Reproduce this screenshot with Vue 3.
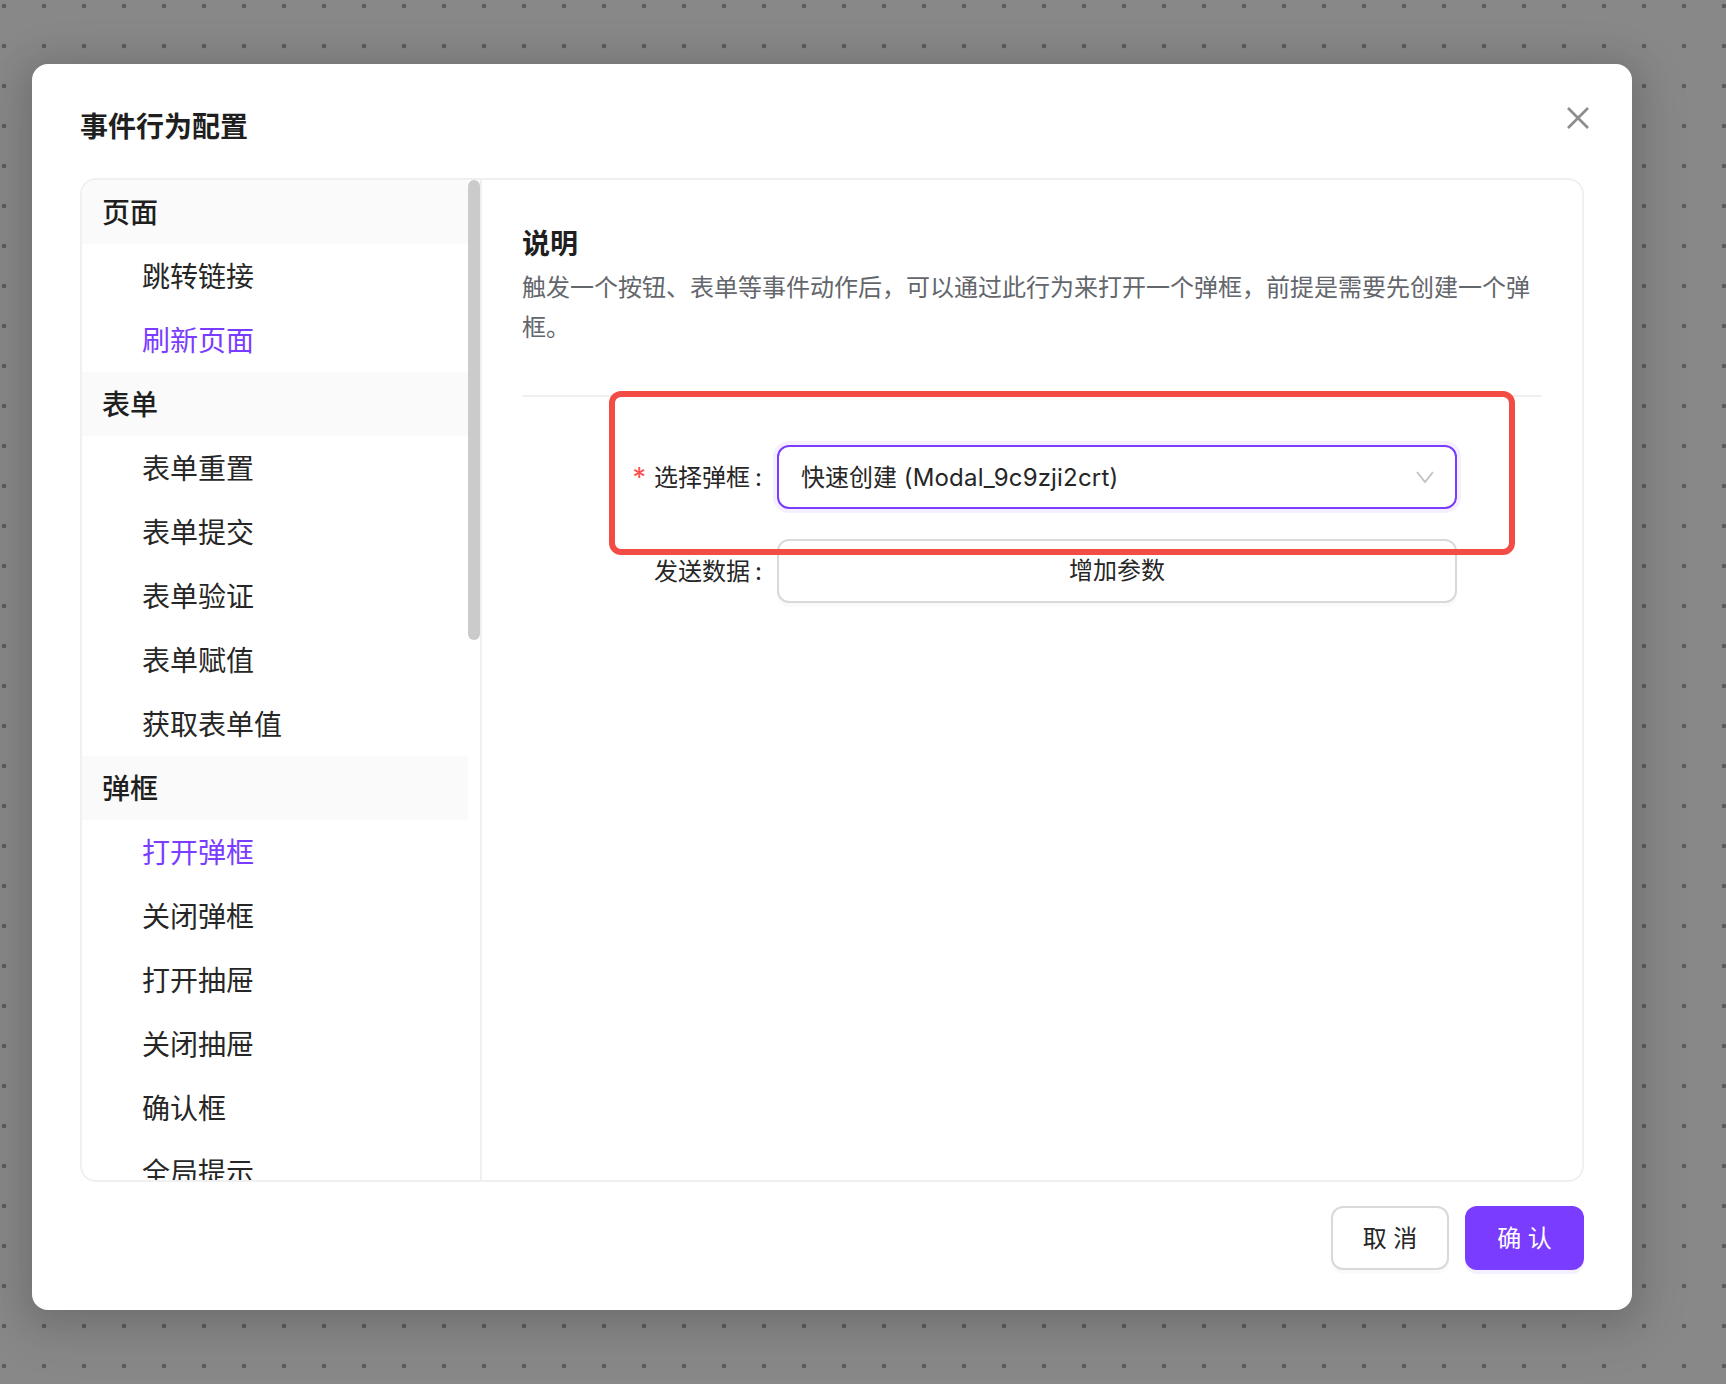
<script setup>
const groups = [
  { name: '页面', items: [{ t: '跳转链接' }, { t: '刷新页面', on: true }] },
  { name: '表单', items: [{ t: '表单重置' }, { t: '表单提交' }, { t: '表单验证' }, { t: '表单赋值' }, { t: '获取表单值' }] },
  { name: '弹框', items: [{ t: '打开弹框', on: true }, { t: '关闭弹框' }, { t: '打开抽屉' }, { t: '关闭抽屉' }, { t: '确认框' }, { t: '全局提示' }] },
]
</script>

<template>
  <div class="page">
    <div class="modal">
      <svg class="close" width="22" height="22" viewBox="0 0 22 22" aria-label="关闭">
        <path d="M1 1L21 21M21 1L1 21" />
      </svg>
      <h2 class="title">事件行为配置</h2>
      <div class="panel">
        <aside class="side">
          <div class="list">
            <template v-for="g in groups" :key="g.name">
              <div class="group">{{ g.name }}</div>
              <div v-for="i in g.items" :key="i.t" class="item" :class="{ on: i.on }">{{ i.t }}</div>
            </template>
          </div>
          <div class="track"><div class="thumb"></div></div>
        </aside>
        <section class="pane">
          <h3 class="head">说明</h3>
          <p class="desc">触发一个按钮、表单等事件动作后，可以通过此行为来打开一个弹框，前提是需要先创建一个弹框。</p>
          <div class="divider"></div>
          <div class="row">
            <label class="label"><span class="req">*</span>选择弹框<span class="colon">:</span></label>
            <div class="select">
              <span class="value">快速创建 <span class="latin">(Modal_9c9zji2crt)</span></span>
              <svg class="chev" width="18" height="12" viewBox="0 0 18 12">
                <path d="M1 1L9 11L17 1" />
              </svg>
            </div>
          </div>
          <div class="row">
            <label class="label">发送数据<span class="colon">:</span></label>
            <button class="add">增加参数</button>
          </div>
          <div class="mark"></div>
        </section>
      </div>
      <div class="foot">
        <button class="btn cancel">取 消</button>
        <button class="btn ok">确 认</button>
      </div>
    </div>
  </div>
</template>

<style>
html, body { margin: 0; background: #888; }
</style>

<style scoped>
.page {
  width: 1726px;
  height: 1384px;
  box-sizing: border-box;
  padding: 64px 0 0 32px;
  overflow: hidden;
  background-color: #888;
  background-image: radial-gradient(circle at center, #5b5b5b 2px, transparent 2.6px);
  background-size: 40px 40px;
  background-position: -16px -14px;
  font-family: Inter, "Noto Sans CJK SC", sans-serif;
  color: #1f1f1f;
}
.modal {
  position: relative;
  width: 1600px;
  height: 1246px;
  box-sizing: border-box;
  padding: 40px 48px;
  background: #fff;
  border-radius: 16px;
  box-shadow: 0 6px 32px 8px rgba(0, 0, 0, .12), 0 12px 56px 16px rgba(0, 0, 0, .06);
}
.close {
  position: absolute;
  top: 43px;
  right: 43px;
  fill: none;
  stroke: #8c8c8c;
  stroke-width: 2.6;
}
.title {
  margin: 0 0 28px;
  font-size: 28px;
  line-height: 46px;
  font-weight: 600;
}
.panel {
  display: flex;
  height: 1004px;
  box-sizing: border-box;
  border: 2px solid #f0f0f0;
  border-radius: 16px;
  overflow: hidden;
}
.side {
  display: flex;
  flex: none;
  width: 400px;
  box-sizing: border-box;
  border-right: 2px solid #f0f0f0;
}
.list { width: 386px; flex: none; }
.group {
  height: 64px;
  padding-left: 20px;
  background: #fafafa;
  font-size: 28px;
  line-height: 66px;
  font-weight: 500;
}
.item {
  height: 64px;
  padding-left: 60px;
  font-size: 28px;
  line-height: 66px;
  color: #262626;
}
.item.on { color: #7a3cff; }
.track { width: 12px; flex: none; }
.thumb { height: 460px; background: #cbcbcb; border-radius: 6px; }
.pane {
  position: relative;
  flex: 1;
  padding: 44px 40px 0;
}
.head {
  margin: 0 0 4px;
  font-size: 28px;
  line-height: 40px;
  font-weight: 600;
}
.desc {
  margin: 0;
  font-size: 24px;
  line-height: 40px;
  color: #63666b;
}
.divider {
  height: 2px;
  margin: 47px 0 48px;
  background: #f0f0f0;
}
.row {
  display: flex;
  align-items: center;
  height: 64px;
  margin-bottom: 30px;
}
.label {
  display: flex;
  justify-content: flex-end;
  align-items: center;
  flex: none;
  width: 255px;
  box-sizing: border-box;
  margin-top: 2px;
  padding-right: 16px;
  font-size: 24px;
  line-height: 64px;
  color: #262626;
}
.req { margin-right: 8px; font-size: 27px; color: #ff4d4f; }
.colon { margin-left: 5px; margin-right: -1px; }
.select {
  display: flex;
  align-items: center;
  justify-content: space-between;
  width: 680px;
  height: 64px;
  box-sizing: border-box;
  padding: 0 21px 0 22px;
  border: 2px solid #7a3cff;
  border-radius: 12px;
  box-shadow: 0 0 0 4px #f5f0ff;
  font-size: 24px;
}
.value { color: #262626; position: relative; top: -2px; }
.latin { letter-spacing: .18px; }
.chev { fill: none; stroke: #c4c4c4; stroke-width: 2; }
.add {
  width: 680px;
  height: 64px;
  padding: 0 0 5px;
  background: #fff;
  border: 2px solid #d9d9d9;
  border-radius: 12px;
  box-shadow: 0 4px 0 rgba(0, 0, 0, .02);
  font: inherit;
  font-size: 24px;
  color: #262626;
}
.mark {
  position: absolute;
  left: 127px;
  top: 211px;
  width: 906px;
  height: 164px;
  box-sizing: border-box;
  border: 6px solid #f24c45;
  border-radius: 12px;
  pointer-events: none;
}
.foot {
  display: flex;
  justify-content: flex-end;
  gap: 16px;
  margin-top: 24px;
}
.btn {
  height: 64px;
  padding: 0 0 4px;
  box-sizing: border-box;
  border-radius: 12px;
  font: inherit;
  font-size: 24px;
}
.cancel {
  width: 118px;
  background: #fff;
  border: 2px solid #d9d9d9;
  box-shadow: 0 4px 0 rgba(0, 0, 0, .02);
  color: #262626;
}
.ok {
  width: 119px;
  background: #7a3cff;
  border: 0;
  box-shadow: 0 4px 0 #f5f0ff;
  color: #fff;
}
</style>
